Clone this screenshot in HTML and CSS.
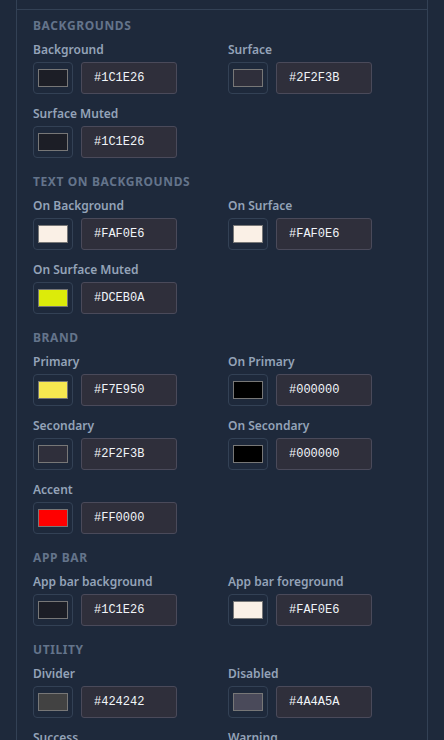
FILE: index.html
```html
<!DOCTYPE html>
<html>
<head>
    <title>Theme Colors</title>
    <link rel="stylesheet" href="styles.css">
</head>
<body>
    <div class="panel">
        <div class="panel-head"></div>

        <div class="section">
            <h3>Backgrounds</h3>
            <div class="grid">
                <div class="field">
                    <label>Background</label>
                    <div class="picker">
                        <button class="swatch"><span style="background:#1C1E26"></span></button>
                        <input class="hex" type="text" value="#1C1E26">
                    </div>
                </div>
                <div class="field">
                    <label>Surface</label>
                    <div class="picker">
                        <button class="swatch"><span style="background:#2F2F3B"></span></button>
                        <input class="hex" type="text" value="#2F2F3B">
                    </div>
                </div>
                <div class="field">
                    <label>Surface Muted</label>
                    <div class="picker">
                        <button class="swatch"><span style="background:#1C1E26"></span></button>
                        <input class="hex" type="text" value="#1C1E26">
                    </div>
                </div>
            </div>
        </div>

        <div class="section">
            <h3>Text on backgrounds</h3>
            <div class="grid">
                <div class="field">
                    <label>On Background</label>
                    <div class="picker">
                        <button class="swatch"><span style="background:#FAF0E6"></span></button>
                        <input class="hex" type="text" value="#FAF0E6">
                    </div>
                </div>
                <div class="field">
                    <label>On Surface</label>
                    <div class="picker">
                        <button class="swatch"><span style="background:#FAF0E6"></span></button>
                        <input class="hex" type="text" value="#FAF0E6">
                    </div>
                </div>
                <div class="field">
                    <label>On Surface Muted</label>
                    <div class="picker">
                        <button class="swatch"><span style="background:#DCEB0A"></span></button>
                        <input class="hex" type="text" value="#DCEB0A">
                    </div>
                </div>
            </div>
        </div>

        <div class="section">
            <h3>Brand</h3>
            <div class="grid">
                <div class="field">
                    <label>Primary</label>
                    <div class="picker">
                        <button class="swatch"><span style="background:#F7E950"></span></button>
                        <input class="hex" type="text" value="#F7E950">
                    </div>
                </div>
                <div class="field">
                    <label>On Primary</label>
                    <div class="picker">
                        <button class="swatch"><span style="background:#000000"></span></button>
                        <input class="hex" type="text" value="#000000">
                    </div>
                </div>
                <div class="field">
                    <label>Secondary</label>
                    <div class="picker">
                        <button class="swatch"><span style="background:#2F2F3B"></span></button>
                        <input class="hex" type="text" value="#2F2F3B">
                    </div>
                </div>
                <div class="field">
                    <label>On Secondary</label>
                    <div class="picker">
                        <button class="swatch"><span style="background:#000000"></span></button>
                        <input class="hex" type="text" value="#000000">
                    </div>
                </div>
                <div class="field">
                    <label>Accent</label>
                    <div class="picker">
                        <button class="swatch"><span style="background:#FF0000"></span></button>
                        <input class="hex" type="text" value="#FF0000">
                    </div>
                </div>
            </div>
        </div>

        <div class="section">
            <h3>App bar</h3>
            <div class="grid">
                <div class="field">
                    <label>App bar background</label>
                    <div class="picker">
                        <button class="swatch"><span style="background:#1C1E26"></span></button>
                        <input class="hex" type="text" value="#1C1E26">
                    </div>
                </div>
                <div class="field">
                    <label>App bar foreground</label>
                    <div class="picker">
                        <button class="swatch"><span style="background:#FAF0E6"></span></button>
                        <input class="hex" type="text" value="#FAF0E6">
                    </div>
                </div>
            </div>
        </div>

        <div class="section">
            <h3>Utility</h3>
            <div class="grid">
                <div class="field">
                    <label>Divider</label>
                    <div class="picker">
                        <button class="swatch"><span style="background:#424242"></span></button>
                        <input class="hex" type="text" value="#424242">
                    </div>
                </div>
                <div class="field">
                    <label>Disabled</label>
                    <div class="picker">
                        <button class="swatch"><span style="background:#4A4A5A"></span></button>
                        <input class="hex" type="text" value="#4A4A5A">
                    </div>
                </div>
                <div class="field">
                    <label>Success</label>
                    <div class="picker">
                        <button class="swatch"><span style="background:#4CAF50"></span></button>
                        <input class="hex" type="text" value="#4CAF50">
                    </div>
                </div>
                <div class="field">
                    <label>Warning</label>
                    <div class="picker">
                        <button class="swatch"><span style="background:#FFC107"></span></button>
                        <input class="hex" type="text" value="#FFC107">
                    </div>
                </div>
            </div>
        </div>
    </div>
</body>
</html>
```

FILE: styles.css
```css
body {
    font-family: "Noto Sans", Arial, sans-serif;
    background: #1e293b;
    margin: 0;
    padding: 0 16px;
}

.panel {
    border-left: 1px solid #334155;
    border-right: 1px solid #334155;
}

.panel-head {
    height: 9px;
    border-bottom: 1px solid #334155;
}

.section {
    padding: 8px 16px 8px;
}

h3 {
    margin: 0 0 6px;
    font-size: 12px;
    line-height: 16px;
    font-weight: 700;
    letter-spacing: 0.05em;
    text-transform: uppercase;
    color: #64748b;
}

.grid {
    display: grid;
    grid-template-columns: 1fr 1fr;
    column-gap: 12px;
    row-gap: 10px;
}

label {
    display: block;
    padding-top: 1px;
    margin-bottom: 3px;
    font-size: 12px;
    line-height: 18px;
    font-weight: 600;
    color: #94a3b8;
}

.picker {
    display: flex;
    gap: 8px;
}

.swatch {
    width: 40px;
    height: 32px;
    padding: 0;
    display: flex;
    align-items: center;
    justify-content: center;
    background: transparent;
    border: 1px solid #334155;
    border-radius: 4px;
}

.swatch span {
    width: 30px;
    height: 18px;
    box-sizing: border-box;
    border: 1px solid #777;
}

.hex {
    width: 96px;
    height: 32px;
    box-sizing: border-box;
    padding: 0 12px;
    background: #2f2f3b;
    border: 1px solid #4a4a5a;
    border-radius: 3px;
    color: #f1f5f9;
    font-family: "Liberation Mono", monospace;
    font-size: 12px;
}
```
